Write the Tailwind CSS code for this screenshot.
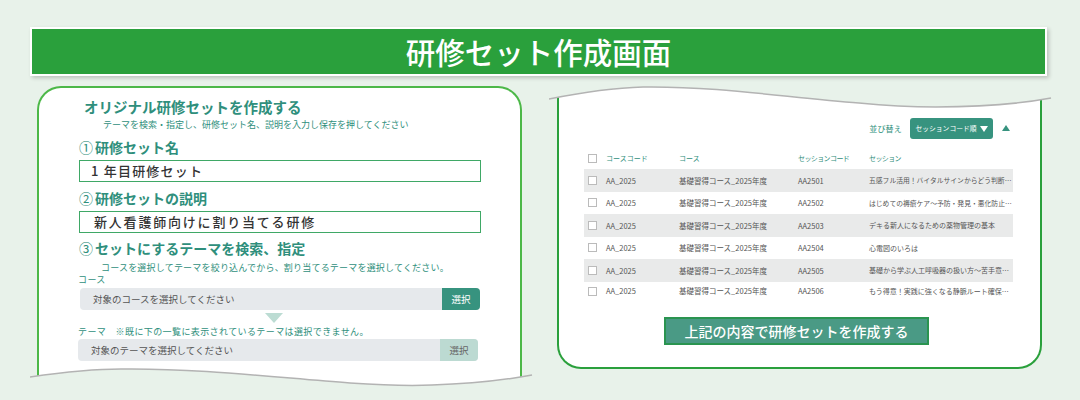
<!DOCTYPE html>
<html lang="ja">
<head>
  <meta charset="UTF-8">
  <title>研修セット作成画面</title>
  <script src="https://cdn.jsdelivr.net/npm/@tailwindcss/browser@4"></script>
</head>
<body class="w-[1080px] h-[400px] overflow-hidden bg-[#e8f2ea] font-['Noto_Sans_CJK_JP','Noto_Sans',sans-serif]">

  <div class="px-[30px] pt-[27px]">
    <!-- Title bar -->
    <div class="w-[1017px] h-[49px] bg-[#2aa03c] border-2 border-white shadow-[2px_2px_4px_rgba(0,0,0,0.2)] flex items-center justify-center">
      <h1 class="text-[29.5px] leading-none font-medium text-white">研修セット作成画面</h1>
    </div>

    <div class="flex items-start mt-[10px] ml-[7px]">
      <!-- Left panel -->
      <div class="relative w-[485px] h-[300px] bg-white border-x-[2px] border-t-[2px] border-[#4cb848] rounded-t-[24px]">
        <div class="pl-[45px] pt-[9px]">
          <p class="text-[14.5px] leading-[20px] font-bold text-[#2f8f7c]">オリジナル研修セットを作成する</p>
          <p class="ml-[19px] mt-[2px] text-[9px] leading-[12px] text-[#2f8f7c]">テーマを検索・指定し、研修セット名、説明を入力し保存を押してください</p>
        </div>
        <div class="pl-[40px] pr-[39px]">
          <p class="mt-[6px] text-[14px] leading-[20px] font-bold text-[#2f8f7c]"><span class="font-normal mr-[2px]">①</span>研修セット名</p>
          <div class="mt-[3px] h-[22px] border border-[#3fa866] flex items-center pl-[11px] text-[13px] font-medium tracking-[1.2px] text-[#333333]">1 年目研修セット</div>
          <p class="mt-[6px] text-[14px] leading-[20px] font-bold text-[#2f8f7c]"><span class="font-normal mr-[2px]">②</span>研修セットの説明</p>
          <div class="mt-[3px] h-[22px] border border-[#3fa866] flex items-center pl-[14px] text-[13px] font-medium tracking-[1.8px] text-[#333333]">新人看護師向けに割り当てる研修</div>
          <p class="mt-[5px] text-[14px] leading-[20px] font-bold text-[#2f8f7c]"><span class="font-normal mr-[2px]">③</span>セットにするテーマを検索、指定</p>
          <p class="ml-[22px] mt-[4px] text-[9px] leading-[12px] tracking-[0.2px] text-[#2f8f7c]">コースを選択してテーマを絞り込んでから、割り当てるテーマを選択してください。</p>
          <p class="-ml-[1px] text-[9px] leading-[12px] tracking-[0.4px] text-[#2f8f7c]">コース</p>
          <div class="mt-[2px] mx-[1px] h-[22px] bg-[#e6e9ec] rounded-[4px] overflow-hidden flex items-center justify-between">
            <span class="pl-[13px] text-[9.5px] text-[#555555]">対象のコースを選択してください</span>
            <span class="w-[38px] h-full bg-[#37937f] flex items-center justify-center text-[9.5px] text-white">選択</span>
          </div>
          <div class="ml-[186px] mt-[3px] w-0 h-0 border-x-[9px] border-x-transparent border-t-[10px] border-t-[#bcdcd3]"></div>
          <p class="-ml-[1px] mt-[3px] text-[9px] leading-[12px] tracking-[0.4px] text-[#2f8f7c]">テーマ　※既に下の一覧に表示されているテーマは選択できません。</p>
          <div class="mt-[1px] -ml-[1px] mr-[3px] h-[22px] bg-[#e6e9ec] rounded-[4px] overflow-hidden flex items-center justify-between">
            <span class="pl-[13px] text-[9.5px] text-[#555555]">対象のテーマを選択してください</span>
            <span class="w-[38px] h-full bg-[#bcdad2] flex items-center justify-center text-[9.5px] text-[#666666]">選択</span>
          </div>
        </div>
        <!-- Torn bottom edge -->
        <svg class="absolute left-[-9px] top-[278px]" width="503" height="22" viewBox="0 0 503 22" fill="none">
          <path d="M0 11C35 6 70 3 91 3C170 2 250 12 320 17C350 19 380 20 402 19C440 18 475 14 502 9V22H0Z" fill="#e8f2ea"/>
          <path d="M0 11C35 6 70 3 91 3C170 2 250 12 320 17C350 19 380 20 402 19C440 18 475 14 502 9" stroke="#b3b3b3" stroke-width="1.5"/>
        </svg>
      </div>

      <!-- Right panel -->
      <div class="relative ml-[35px] w-[485px] h-[283px] bg-white border-x-[2px] border-b-[2px] border-[#2aa03c] rounded-b-[24px] pt-[32px]">
        <svg class="absolute left-[-10px] top-0" width="503" height="24" viewBox="0 0 503 24" fill="none">
          <path d="M0 13C30 7 60 2 94 1C170 0 240 12 310 17C340 20 370 21 387 21C430 21 470 18 502 12V0H0Z" fill="#e8f2ea"/>
          <path d="M0 13C30 7 60 2 94 1C170 0 240 12 310 17C340 20 370 21 387 21C430 21 470 18 502 12" stroke="#b3b3b3" stroke-width="1.5"/>
        </svg>

        <!-- Sort -->
        <div class="flex items-center justify-end pr-[30px]">
          <span class="text-[8px] tracking-[0.2px] text-[#2f8f7c] mr-[8px]">並び替え</span>
          <span class="w-[83px] h-[21px] bg-[#37937f] rounded-[3px] flex items-center justify-center gap-[3px] whitespace-nowrap text-[6.8px] text-white">セッションコード順<svg width="8" height="6" viewBox="0 0 8 6"><path d="M0 0H8L4 6Z" fill="#fff"/></svg></span>
          <svg class="ml-[9px] -mt-[1px]" width="8" height="6" viewBox="0 0 8 6"><path d="M0 6H8L4 0Z" fill="#37937f"/></svg>
        </div>

        <!-- Table -->
        <div class="ml-[25px] w-[429px] mt-[8px] text-[7.5px] text-[#555555]">
          <div class="h-[22px] flex items-center text-[7px] text-[#2f8f7c]">
            <span class="w-[22px] pl-[4px]"><span class="block w-[9px] h-[9px] border border-[#bbbbbb]"></span></span>
            <span class="w-[73px]">コースコード</span>
            <span class="w-[119px]">コース</span>
            <span class="w-[71px] tracking-[-0.6px]">セッションコード</span>
            <span class="tracking-[-0.6px]">セッション</span>
          </div>
          <div class="h-[23px] bg-[#e9eaea] flex items-center">
            <span class="w-[22px] pl-[4px]"><span class="block w-[9px] h-[9px] border border-[#bbbbbb] bg-white"></span></span>
            <span class="w-[73px]">AA_2025</span>
            <span class="w-[119px]">基礎習得コース_2025年度</span>
            <span class="w-[71px]">AA2501</span>
            <span class="w-[143px] whitespace-nowrap text-[6.8px]">五感フル活用！バイタルサインからどう判断…</span>
          </div>
          <div class="h-[22px] flex items-center">
            <span class="w-[22px] pl-[4px] -mt-[2px]"><span class="block w-[9px] h-[9px] border border-[#bbbbbb] bg-white"></span></span>
            <span class="w-[73px]">AA_2025</span>
            <span class="w-[119px]">基礎習得コース_2025年度</span>
            <span class="w-[71px]">AA2502</span>
            <span class="w-[143px] whitespace-nowrap text-[6.8px]">はじめての褥瘡ケア～予防・発見・悪化防止…</span>
          </div>
          <div class="h-[23px] bg-[#e9eaea] flex items-center">
            <span class="w-[22px] pl-[4px]"><span class="block w-[9px] h-[9px] border border-[#bbbbbb] bg-white"></span></span>
            <span class="w-[73px]">AA_2025</span>
            <span class="w-[119px]">基礎習得コース_2025年度</span>
            <span class="w-[71px]">AA2503</span>
            <span class="w-[143px] whitespace-nowrap text-[7px]">デキる新人になるための薬物管理の基本</span>
          </div>
          <div class="h-[22px] flex items-center">
            <span class="w-[22px] pl-[4px] -mt-[2px]"><span class="block w-[9px] h-[9px] border border-[#bbbbbb] bg-white"></span></span>
            <span class="w-[73px]">AA_2025</span>
            <span class="w-[119px]">基礎習得コース_2025年度</span>
            <span class="w-[71px]">AA2504</span>
            <span class="w-[143px] whitespace-nowrap text-[7px]">心電図のいろは</span>
          </div>
          <div class="h-[23px] bg-[#e9eaea] flex items-center">
            <span class="w-[22px] pl-[4px]"><span class="block w-[9px] h-[9px] border border-[#bbbbbb] bg-white"></span></span>
            <span class="w-[73px]">AA_2025</span>
            <span class="w-[119px]">基礎習得コース_2025年度</span>
            <span class="w-[71px]">AA2505</span>
            <span class="w-[143px] whitespace-nowrap text-[7px]">基礎から学ぶ人工呼吸器の扱い方～苦手意…</span>
          </div>
          <div class="h-[18px] flex items-center">
            <span class="w-[22px] pl-[4px]"><span class="block w-[9px] h-[9px] border border-[#bbbbbb] bg-white"></span></span>
            <span class="w-[73px]">AA_2025</span>
            <span class="w-[119px]">基礎習得コース_2025年度</span>
            <span class="w-[71px]">AA2506</span>
            <span class="w-[143px] whitespace-nowrap text-[7px]">もう得意！実践に強くなる静脈ルート確保…</span>
          </div>
        </div>

        <!-- Submit -->
        <div class="ml-[105px] mt-[17px] w-[265px] h-[28px] bg-[#4a9a85] border-2 border-[#2a9450] flex items-center justify-center text-[14px] font-medium text-white">上記の内容で研修セットを作成する</div>
      </div>
    </div>
  </div>

</body>
</html>
